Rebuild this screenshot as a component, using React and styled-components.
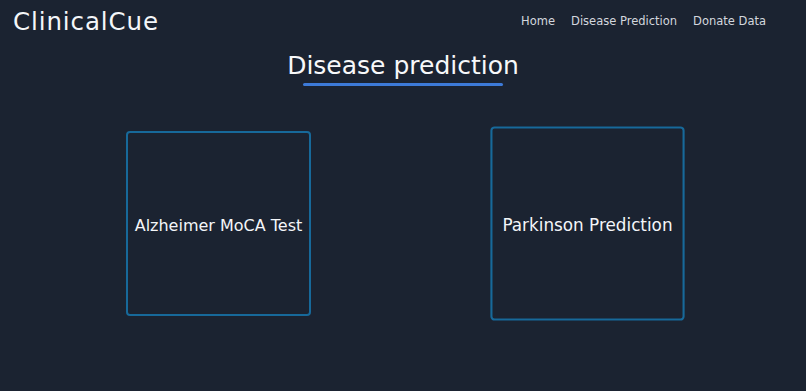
import React from 'react'
import styled, { createGlobalStyle } from 'styled-components'

const GlobalStyle = createGlobalStyle`
  html, body {
    margin: 0;
    padding: 0;
    background: #1b2331;
    font-family: "DejaVu Sans", "Open Sans", sans-serif;
    color: #f2f4f7;
  }
`

const Page = styled.div`
  min-height: 391px;
  background: #1b2331;
`

const Header = styled.header`
  display: flex;
  align-items: center;
  justify-content: space-between;
  height: 42px;
  padding: 0 40px 0 13px;
`

const Logo = styled.div`
  font-size: 24.5px;
  font-weight: 400;
  letter-spacing: 0.9px;
  color: #f4f6f9;
`

const Nav = styled.nav`
  display: flex;
  gap: 16px;
`

const NavLink = styled.a`
  font-size: 11.5px;
  color: #d3d7de;
  text-decoration: none;
  cursor: pointer;
`

const Title = styled.h1`
  margin: 9px auto 0;
  width: fit-content;
  font-size: 25px;
  font-weight: 500;
  text-align: center;
  color: #f7f8fa;
  &::after {
    content: '';
    display: block;
    width: 200px;
    height: 3px;
    margin: 3px auto 0;
    background: #3d7ad8;
    border-radius: 2px;
  }
`

const Cards = styled.div`
  display: flex;
  justify-content: center;
  gap: 184px;
  margin-top: 45px;
`

const Card = styled.div`
  width: 185px;
  height: 185px;
  box-sizing: border-box;
  padding-top: 4px;
  border: 2px solid #17699a;
  border-radius: 4px;
  display: flex;
  align-items: center;
  justify-content: center;
  text-align: center;
  font-size: 16px;
  font-weight: 500;
  color: #f4f6f9;
  transform: scale(${p => (p.$hover ? 1.05 : 1)});
  cursor: pointer;
`

export default function App() {
  return (
    <Page>
      <GlobalStyle />
      <Header>
        <Logo>ClinicalCue</Logo>
        <Nav>
          <NavLink>Home</NavLink>
          <NavLink>Disease Prediction</NavLink>
          <NavLink>Donate Data</NavLink>
        </Nav>
      </Header>
      <Title>Disease prediction</Title>
      <Cards>
        <Card>Alzheimer MoCA Test</Card>
        <Card $hover>Parkinson Prediction</Card>
      </Cards>
    </Page>
  )
}
